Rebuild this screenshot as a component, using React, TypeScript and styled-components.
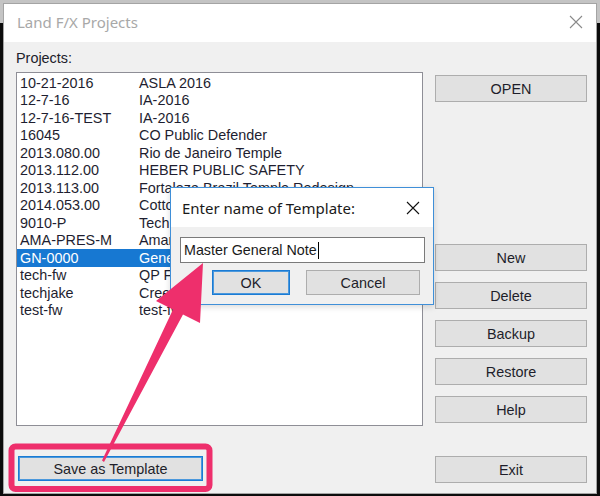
import React from "react";
import styled, { createGlobalStyle, css } from "styled-components";

const GlobalStyle = createGlobalStyle`
  html, body { margin: 0; padding: 0; background: #0c0c0c; }
  * { box-sizing: border-box; }
`;

const UI = `"Liberation Sans", Arial, sans-serif`;
const TITLE = `"Noto Sans", "Open Sans", sans-serif`;

const Screen = styled.div`
  position: relative;
  width: 600px;
  height: 496px;
  overflow: hidden;
  padding: 3px 3px 2px 3px;
  background: linear-gradient(to bottom, #c4c4c4 0, #c4c4c4 23px, #0c0c0c 23px);
`;

const Window = styled.div`
  position: relative;
  width: 594px;
  height: 491px;
  border: 1px solid #a4a4a4;
  background: #f0f0f0;
  display: flex;
  flex-direction: column;
`;

const TitleBar = styled.div`
  height: 38px;
  flex: none;
  background: #ffffff;
  display: flex;
  align-items: center;
  justify-content: space-between;
  padding: 0 13px 3px 13px;
`;

const TitleText = styled.span<{ $dark?: boolean }>`
  font-family: ${TITLE};
  font-size: 15px;
  color: ${(p) => (p.$dark ? "#1a1a1a" : "#a8a8a8")};
  line-height: 20px;
`;

const CloseIcon = ({ color, size }: { color: string; size: number }) => (
  <svg width={size} height={size} viewBox="0 0 14 14">
    <path d="M1 1 L13 13 M13 1 L1 13" stroke={color} strokeWidth="1.1" fill="none" />
  </svg>
);

const Client = styled.div`
  flex: 1;
  display: grid;
  grid-template-columns: 407px 152px;
  column-gap: 12px;
  padding: 0 9px 0 12px;
`;

const LeftCol = styled.div`
  display: flex;
  flex-direction: column;
  padding-top: 6px;
`;

const RightCol = styled.div`
  display: flex;
  flex-direction: column;
  padding-top: 33px;
`;

const Label = styled.div`
  font-family: ${UI};
  font-size: 14.4px;
  line-height: 20px;
  color: #20202a;
  margin-bottom: 4px;
`;

const ListBox = styled.div`
  height: 354px;
  background: #ffffff;
  border: 1px solid #8e8e96;
  padding-top: 1px;
  overflow: hidden;
`;

const Row = styled.div<{ $selected?: boolean }>`
  display: flex;
  height: 17.5px;
  align-items: center;
  padding-left: 3px;
  font-family: ${UI};
  font-size: 14.4px;
  white-space: nowrap;
  color: #1e1e30;
  ${(p) =>
    p.$selected &&
    css`
      background: #1778d2;
      color: #ffffff;
    `}
`;

const CodeCell = styled.span`
  width: 119px;
  flex: none;
`;

const NameCell = styled.span`
  flex: 1;
`;

const Button = styled.button<{ $w?: number; $h?: number; $focus?: boolean; $gap?: number }>`
  width: ${(p) => (p.$w ? `${p.$w}px` : "100%")};
  height: ${(p) => p.$h ?? 27}px;
  margin-top: ${(p) => p.$gap ?? 0}px;
  flex: none;
  padding: 0;
  background: #e1e1e1;
  border: 1px solid #adadad;
  font-family: ${UI};
  font-size: 14.4px;
  color: #1e1e2a;
  ${(p) =>
    p.$focus &&
    css`
      border-color: #1a7bd4;
      box-shadow: inset 0 0 0 1px #4b98dc;
    `}
`;

const SaveWrap = styled.div`
  margin-top: 30px;
  margin-left: 2px;
`;

const Dialog = styled.div`
  position: absolute;
  left: 166px;
  top: 183px;
  width: 264px;
  height: 118px;
  border: 1px solid #3f8fd8;
  background: #f0f0f0;
  display: flex;
  flex-direction: column;
  box-shadow: 0 2px 6px rgba(0, 0, 0, 0.15);
`;

const DialogTitle = styled.div`
  height: 39px;
  flex: none;
  background: #ffffff;
  display: flex;
  align-items: center;
  justify-content: space-between;
  padding: 0 13px 0 11px;
`;

const DialogBody = styled.div`
  display: flex;
  flex-direction: column;
  padding: 10px 8px 0 9px;
`;

const Input = styled.div`
  height: 26px;
  background: #ffffff;
  border: 1px solid #7a7a7a;
  display: flex;
  align-items: center;
  padding-left: 3px;
  font-family: ${UI};
  font-size: 14.3px;
  color: #1a1a1a;
`;

const Caret = styled.span`
  display: inline-block;
  width: 1px;
  height: 17px;
  background: #000;
  margin-left: 1px;
`;

const DialogButtons = styled.div`
  display: flex;
  gap: 16px;
  margin-top: 7px;
  padding-left: 32px;
`;

const Annotation = styled.svg`
  position: absolute;
  left: 0;
  top: 0;
  pointer-events: none;
`;

const projects: [string, string][] = [
  ["10-21-2016", "ASLA 2016"],
  ["12-7-16", "IA-2016"],
  ["12-7-16-TEST", "IA-2016"],
  ["16045", "CO Public Defender"],
  ["2013.080.00", "Rio de Janeiro Temple"],
  ["2013.112.00", "HEBER PUBLIC SAFETY"],
  ["2013.113.00", "Fortaleza Brazil Temple Redesign"],
  ["2014.053.00", "Cottonwood Heights"],
  ["9010-P", "Tech Center"],
  ["AMA-PRES-M", "Amarillo Presbyterian"],
  ["GN-0000", "General Notes"],
  ["tech-fw", "QP Fleet"],
  ["techjake", "Creekside"],
  ["test-fw", "test-fw"],
];

export default function App() {
  return (
    <>
      <GlobalStyle />
      <Screen>
        <Window>
          <TitleBar>
            <TitleText>Land F/X Projects</TitleText>
            <CloseIcon color="#8a8a8a" size={14} />
          </TitleBar>
          <Client>
            <LeftCol>
              <Label>Projects:</Label>
              <ListBox>
                {projects.map(([code, name]) => (
                  <Row key={code} $selected={code === "GN-0000"}>
                    <CodeCell>{code}</CodeCell>
                    <NameCell>{name}</NameCell>
                  </Row>
                ))}
              </ListBox>
              <SaveWrap>
                <Button $w={185} $h={25} $focus>
                  Save as Template
                </Button>
              </SaveWrap>
            </LeftCol>
            <RightCol>
              <Button>OPEN</Button>
              <Button $gap={142}>New</Button>
              <Button $gap={11}>Delete</Button>
              <Button $gap={11}>Backup</Button>
              <Button $gap={11}>Restore</Button>
              <Button $gap={11}>Help</Button>
              <Button $gap={33}>Exit</Button>
            </RightCol>
          </Client>
          <Dialog>
            <DialogTitle>
              <TitleText $dark>Enter name of Template:</TitleText>
              <CloseIcon color="#111" size={14} />
            </DialogTitle>
            <DialogBody>
              <Input>
                Master General Note
                <Caret />
              </Input>
              <DialogButtons>
                <Button $w={78} $h={25} $focus>
                  OK
                </Button>
                <Button $w={114} $h={25}>
                  Cancel
                </Button>
              </DialogButtons>
            </DialogBody>
          </Dialog>
        </Window>
        <Annotation width={600} height={496} viewBox="0 0 600 496">
          <rect
            x={11.5}
            y={446.5}
            width={198}
            height={42.5}
            rx={4}
            fill="none"
            stroke="#ee2f6c"
            strokeWidth={6}
          />
          <polygon
            points="203,263 200,323 183,314.5 104,462 102,460.5 173,309.5 156,301"
            fill="#ee2f6c"
            strokeLinejoin="round"
          />
        </Annotation>
      </Screen>
    </>
  );
}
